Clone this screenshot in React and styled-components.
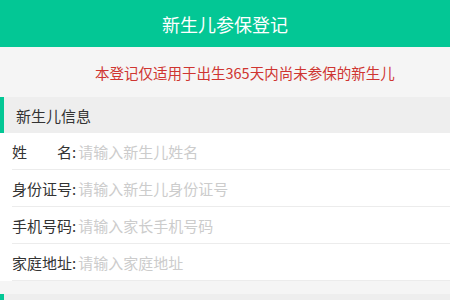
import React from 'react';
import styled, { createGlobalStyle } from 'styled-components';

const GlobalStyle = createGlobalStyle`
  html, body {
    margin: 0;
    padding: 0;
    background: #f5f5f5;
    font-family: "Noto Sans CJK SC", "Noto Sans", sans-serif;
  }
`;

const Page = styled.div`
  width: 450px;
  height: 300px;
  overflow: hidden;
  background: #f5f5f5;
`;

const Header = styled.header`
  height: 47px;
  background: #03c795;
  color: #ffffff;
  display: flex;
  align-items: center;
  justify-content: center;
  font-size: 18px;
`;

const Notice = styled.div`
  height: 50px;
  display: flex;
  align-items: center;
  padding: 0 0 0 95px;
  color: #cf3531;
  font-size: 14.5px;
`;

const SectionTitle = styled.div`
  height: 36px;
  display: flex;
  align-items: center;
  background: #eeeeee;
  border-left: 4px solid #03c795;
  padding: 0 0 0 12px;
  color: #333333;
  font-size: 15px;
  margin: ${(p) => (p.$gap ? '13px 0 0 0' : '0')};
`;

const Form = styled.div`
  background: #ffffff;
  padding: 0 0 0 12px;
`;

const Row = styled.label`
  height: 36px;
  display: flex;
  align-items: center;
  border-bottom: 1px solid #ececec;
  font-size: 15px;
  color: #333333;
`;

const Label = styled.span`
  width: 60px;
  display: flex;
  justify-content: space-between;
`;

const Colon = styled.span`
  margin: 0 2px 0 0;
`;

const Input = styled.input`
  flex: 1;
  border: none;
  outline: none;
  background: transparent;
  padding: 0;
  font-family: inherit;
  font-size: 15px;
  color: #333333;

  &::placeholder {
    color: #cccccc;
  }
`;

const fields = [
  { label: ['姓', '名'], placeholder: '请输入新生儿姓名' },
  { label: ['身份证号'], placeholder: '请输入新生儿身份证号' },
  { label: ['手机号码'], placeholder: '请输入家长手机号码' },
  { label: ['家庭地址'], placeholder: '请输入家庭地址' },
];

const App = () => (
  <Page>
    <GlobalStyle />
    <Header>新生儿参保登记</Header>
    <Notice>本登记仅适用于出生365天内尚未参保的新生儿</Notice>
    <SectionTitle>新生儿信息</SectionTitle>
    <Form>
      {fields.map((f) => (
        <Row key={f.placeholder}>
          <Label>
            {f.label.map((part) => (
              <span key={part}>{part}</span>
            ))}
          </Label>
          <Colon>:</Colon>
          <Input placeholder={f.placeholder} />
        </Row>
      ))}
    </Form>
    <SectionTitle $gap />
  </Page>
);

export default App;
